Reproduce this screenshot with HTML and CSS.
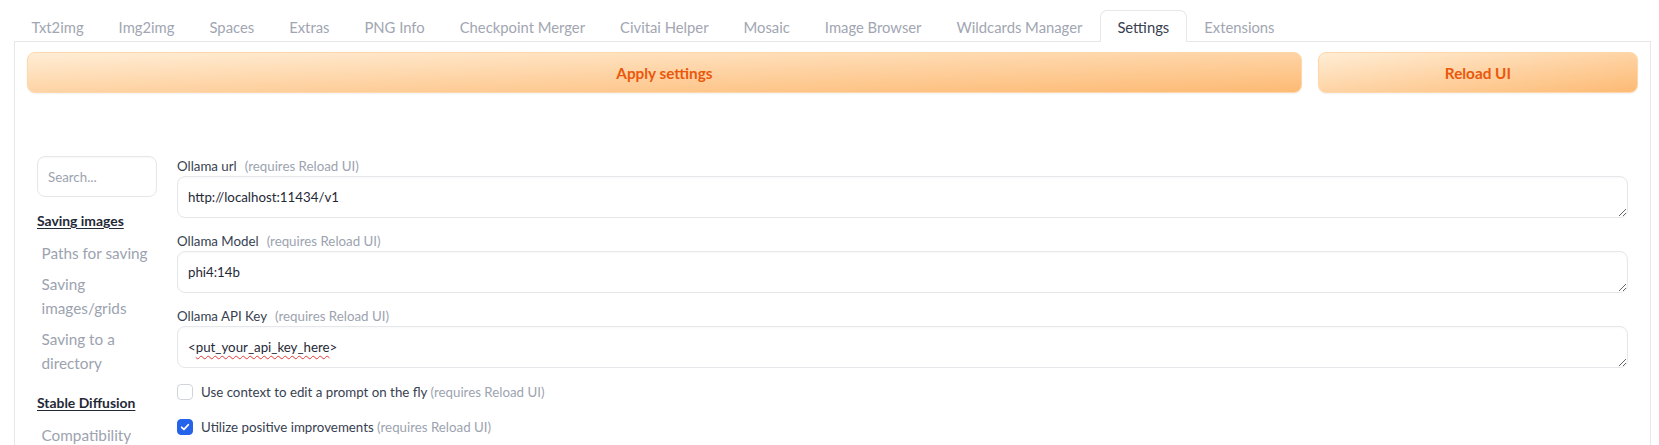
FILE: index.html
```html
<!DOCTYPE html>
<html lang="en">
<head>
<meta charset="utf-8">
<title>Settings</title>
<link rel="stylesheet" href="styles.css">
</head>
<body>
<div class="app">
  <div class="tab-nav">
    <button class="tab">Txt2img</button>
    <button class="tab">Img2img</button>
    <button class="tab">Spaces</button>
    <button class="tab">Extras</button>
    <button class="tab">PNG Info</button>
    <button class="tab">Checkpoint Merger</button>
    <button class="tab">Civitai Helper</button>
    <button class="tab">Mosaic</button>
    <button class="tab">Image Browser</button>
    <button class="tab">Wildcards Manager</button>
    <button class="tab selected">Settings</button>
    <button class="tab">Extensions</button>
  </div>
  <div class="tab-panel">
    <div class="actions">
      <button class="btn btn-apply">Apply settings</button>
      <button class="btn btn-reload">Reload UI</button>
    </div>
    <div class="settings-body">
      <nav class="sidebar">
        <input class="search" type="text" placeholder="Search...">
        <a class="section">Saving images</a>
        <div class="item">Paths for saving</div>
        <div class="item">Saving images/grids</div>
        <div class="item">Saving to a directory</div>
        <a class="section">Stable Diffusion</a>
        <div class="item">Compatibility</div>
      </nav>
      <div class="main">
        <div class="field">
          <div class="label">Ollama url<span class="req">(requires Reload UI)</span></div>
          <div class="textbox">http://localhost:11434/v1</div>
        </div>
        <div class="field">
          <div class="label">Ollama Model<span class="req">(requires Reload UI)</span></div>
          <div class="textbox">phi4:14b</div>
        </div>
        <div class="field">
          <div class="label">Ollama API Key<span class="req">(requires Reload UI)</span></div>
          <div class="textbox">&lt;<span class="misspelled">put_your_api_key_here</span>&gt;</div>
        </div>
        <div class="check-row">
          <span class="checkbox"></span>
          <span class="check-label">Use context to edit a prompt on the fly <span class="req-inline">(requires Reload UI)</span></span>
        </div>
        <div class="check-row">
          <span class="checkbox checked">
            <svg viewBox="0 0 16 16" width="16" height="16"><path d="M4.2 8.3 L6.8 10.8 L11.8 5.4" fill="none" stroke="#fff" stroke-width="2" stroke-linecap="round" stroke-linejoin="round"/></svg>
          </span>
          <span class="check-label">Utilize positive improvements <span class="req-inline">(requires Reload UI)</span></span>
        </div>
      </div>
    </div>
  </div>
</div>
</body>
</html>
```
FILE: styles.css
```css
html, body {
  margin: 0;
  padding: 0;
  background: #ffffff;
  overflow: hidden;
  height: 445px;
}
body {
  font-family: "Lato", "Noto Sans", sans-serif;
  color: #374151;
}
.app {
  padding: 10px 8px 0 14px;
}
.tab-nav {
  display: flex;
  height: 32px;
  position: relative;
  z-index: 2;
}
.tab {
  font-family: inherit;
  font-size: 14.8px;
  color: #a1a6b2;
  background: transparent;
  border: 1px solid transparent;
  border-bottom: none;
  border-radius: 7px 7px 0 0;
  padding: 0 16.5px;
  height: 32px;
  margin: 0;
  cursor: pointer;
}
.tab.selected {
  color: #374151;
  background: #ffffff;
  border-color: #e5e7eb;
}
.tab-panel {
  border: 1px solid #e5e7eb;
  border-bottom: none;
  margin-top: -1px;
  padding: 10px 12px 0 12px;
  height: 420px;
}
.actions {
  display: flex;
  gap: 16px;
}
.btn {
  font-family: inherit;
  font-size: 15.3px;
  font-weight: 700;
  color: #ea580c;
  height: 41px;
  padding: 0;
  border: 1px solid #fed7aa;
  border-radius: 8px;
  background: linear-gradient(to bottom right, #ffedd5, #fdba74);
  box-shadow: 0 1px 2px rgba(0, 0, 0, 0.06);
  min-width: 0;
}
.btn-apply { flex: 4 1 0; }
.btn-reload { flex: 1 1 0; }
.settings-body {
  display: grid;
  grid-template-columns: 120px 1fr;
  gap: 20px;
  padding: 0 10px;
  margin-top: 63px;
}
.sidebar {
  display: flex;
  flex-direction: column;
}
.search {
  box-sizing: border-box;
  height: 41px;
  width: 120px;
  border: 1px solid #e5e7eb;
  border-radius: 8px;
  padding: 0 10px;
  font-family: inherit;
  font-size: 13.3px;
  color: #374151;
  outline: none;
  box-shadow: inset 0 1px 2px rgba(0, 0, 0, 0.03);
}
.search::placeholder { color: #9ca3af; }
.section {
  margin-top: 14px;
  line-height: 20px;
  font-size: 13.9px;
  font-weight: 700;
  color: #1f2937;
  text-decoration: underline;
  text-underline-offset: 2px;
}
.section + .item { margin-top: 6.5px; }
.item {
  font-size: 15.3px;
  line-height: 24px;
  padding: 3.5px 0 3.5px 4.5px;
  color: #9ca3af;
}
.main {
  display: flex;
  flex-direction: column;
}
.field {
  margin-bottom: 13px;
}
.label {
  font-size: 13.3px;
  line-height: 20px;
  color: #374151;
}
.req {
  color: #9ca3af;
  margin-left: 8px;
}
.req-inline { color: #9ca3af; }
.textbox {
  box-sizing: border-box;
  height: 42px;
  border: 1px solid #e5e7eb;
  border-radius: 8px;
  padding: 10px 10px;
  font-size: 13.3px;
  line-height: 20px;
  color: #1f2937;
  overflow: auto;
  resize: vertical;
  box-shadow: inset 0 1px 2px rgba(0, 0, 0, 0.03);
}
.misspelled {
  text-decoration: underline wavy #e53935;
  text-decoration-thickness: 1px;
  text-underline-offset: 3px;
}
.check-row {
  display: flex;
  align-items: center;
  gap: 8px;
  height: 16px;
  margin-top: 3px;
  margin-bottom: 15.5px;
}
.checkbox {
  box-sizing: border-box;
  width: 16px;
  height: 16px;
  border: 1px solid #d1d5db;
  border-radius: 4px;
  background: #ffffff;
  display: flex;
  align-items: center;
  justify-content: center;
  flex: none;
}
.checkbox.checked {
  background: #2563eb;
  border-color: #2563eb;
}
.checkbox svg { display: block; }
.check-label {
  font-size: 13.3px;
  line-height: 20px;
  color: #374151;
}
```
